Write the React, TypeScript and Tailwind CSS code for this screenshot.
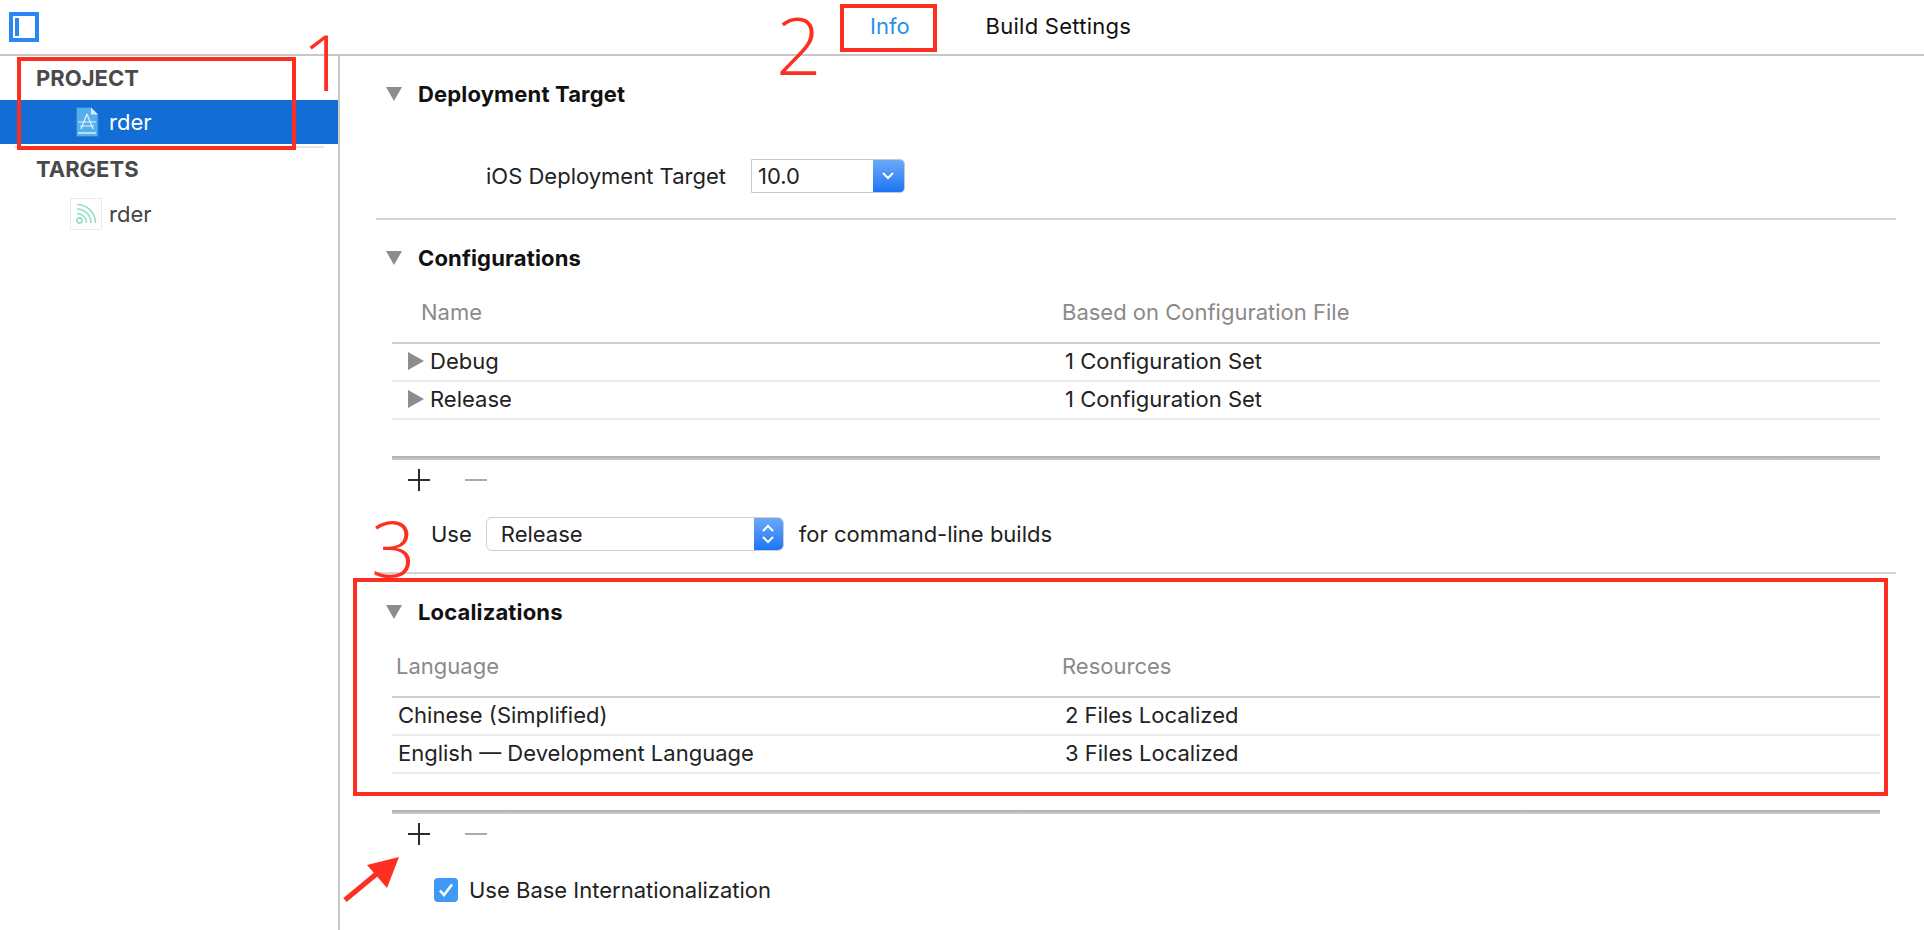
const font = { fontFamily: '"Inter", "Liberation Sans", sans-serif' }
const handFont = { fontFamily: '"Open Sans", sans-serif' }

const configRows = [
  { name: "Debug", value: "1 Configuration Set" },
  { name: "Release", value: "1 Configuration Set" },
]

const localeRows = [
  { name: "Chinese (Simplified)", value: "2 Files Localized" },
  { name: "English — Development Language", value: "3 Files Localized" },
]

function Triangle() {
  return (
    <svg width="16" height="14" viewBox="0 0 16 14" className="shrink-0">
      <path d="M0 0H16L8 14Z" fill="#8c8c8c" />
    </svg>
  )
}

function SectionHeader({ title }: { title: string }) {
  return (
    <div className="flex h-[36px] items-center pl-[10px]">
      <Triangle />
      <span className="ml-[16px] text-[22px] font-bold tracking-[0.15px] text-[#111]">{title}</span>
    </div>
  )
}

function AddRemove() {
  return (
    <div className="flex h-[40px] items-center pl-[16px]">
      <svg width="22" height="22" viewBox="0 0 22 22">
        <path d="M0 11H22M11 0V22" stroke="#2b2b2b" strokeWidth="2" />
      </svg>
      <svg width="22" height="22" viewBox="0 0 22 22" className="ml-[35px]">
        <path d="M0 11H22" stroke="#ababab" strokeWidth="2" />
      </svg>
    </div>
  )
}

function ThickLine() {
  return <div className="h-[4px] bg-linear-to-b from-[#b0b0b0] to-[#cccccc]" />
}

function SidebarFileIcon() {
  return (
    <svg width="24" height="30" viewBox="0 0 24 30" className="shrink-0">
      <path d="M1.5 0.5H16L23 7.5V29.5H1.5Z" fill="#55aef0" stroke="#2b82d4" strokeWidth="1" />
      <path d="M16 0.5L23 7.5H16Z" fill="#d6ecfb" />
      <path d="M3 26H21" stroke="#dff0fc" strokeWidth="1.5" />
      <path d="M12 7L6 22M12 7L18 22M3 15H21M5 19H19" stroke="#e3f2fd" strokeWidth="1.2" fill="none" />
    </svg>
  )
}

function RssIcon() {
  return (
    <div className="flex h-[32px] w-[32px] shrink-0 items-center justify-center border border-[#ececec] bg-white">
      <svg width="22" height="22" viewBox="0 0 22 22" fill="none" stroke="#93dfc6" strokeWidth="1.6">
        <circle cx="4.5" cy="17.5" r="2.6" />
        <path d="M2 10.5a9.5 9.5 0 0 1 9.5 9.5" />
        <path d="M2 6a14 14 0 0 1 14 14" />
        <path d="M2 1.5a18.5 18.5 0 0 1 18.5 18.5" />
      </svg>
    </div>
  )
}

function Disclosure() {
  return (
    <svg width="16" height="18" viewBox="0 0 16 18" className="shrink-0">
      <path d="M0 0L16 9L0 18Z" fill="#8c8c8c" />
    </svg>
  )
}

export default function App() {
  return (
    <div className="relative h-[930px] w-[1924px] overflow-hidden bg-white text-[#222]" style={font}>
      <header className="flex h-[56px] items-start border-b-2 border-[#c8c8c8] pl-[9px]">
        <svg width="30" height="30" viewBox="0 0 30 30" className="mt-[12px] shrink-0">
          <rect x="2" y="2" width="26" height="26" fill="none" stroke="#2a86f2" strokeWidth="4" />
          <rect x="6" y="6" width="4" height="18" fill="#2a86f2" />
        </svg>
        <div className="ml-[831px] flex h-[54px] items-center pb-[2px] text-[22px]">
          <span className="text-[#2a8fe6]">Info</span>
          <span className="ml-[76px] tracking-[0.25px] text-[#111]">Build Settings</span>
        </div>
      </header>

      <div className="flex h-[874px]">
        <aside className="w-[340px] shrink-0 border-r-2 border-[#c8c8c8] text-[22px]">
          <div className="flex h-[44px] items-center pl-[36px] text-[22px] font-bold text-[#4a4a4a]">PROJECT</div>
          <div className="flex h-[44px] items-center bg-[#126dd5] pl-[75px] text-white">
            <SidebarFileIcon />
            <span className="ml-[10px]">rder</span>
          </div>
          <div className="mx-[14px] mt-[2px] h-[2px] bg-[#e6e6e6]" />
          <div className="flex h-[42px] items-center pl-[36px] text-[22px] font-bold text-[#4a4a4a]">TARGETS</div>
          <div className="mt-[4px] flex h-[40px] items-center pl-[70px] text-[#444]">
            <RssIcon />
            <span className="ml-[7px]">rder</span>
          </div>
        </aside>

        <main className="flex-1 pl-[36px] pr-[28px] text-[22px]">
          <div className="mt-[20px]">
            <SectionHeader title="Deployment Target" />
          </div>
          <div className="mt-[47px] flex h-[34px] items-center pl-[110px]">
            <span>iOS Deployment Target</span>
            <div className="ml-[25px] flex h-[34px] w-[154px] overflow-hidden rounded-r-[5px] border border-[#c8c8c8] bg-white">
              <span className="flex-1 pl-[6px] leading-[33px]">10.0</span>
              <div className="flex w-[31px] items-center justify-center bg-linear-to-b from-[#6aa9f7] to-[#1a74f5]">
                <svg width="12" height="8" viewBox="0 0 12 8" fill="none" stroke="white" strokeWidth="2">
                  <path d="M1 1L6 6L11 1" />
                </svg>
              </div>
            </div>
          </div>
          <div className="mt-[25px] h-[2px] bg-[#d4d4d4]" />

          <div className="mt-[20px]">
            <SectionHeader title="Configurations" />
          </div>
          <div className="mx-[16px] mt-[18px]">
            <div className="flex h-[50px] border-b-2 border-[#cfcfcf] pb-[12px] pt-[2px] text-[#8a8a8a]">
              <span className="w-[670px] pl-[29px]">Name</span>
              <span>Based on Configuration File</span>
            </div>
            {configRows.map((row) => (
              <div key={row.name} className="flex h-[38px] items-center border-b-2 border-[#ececec] pb-[2px]">
                <div className="flex w-[673px] items-center pl-[16px]">
                  <Disclosure />
                  <span className="ml-[6px]">{row.name}</span>
                </div>
                <span>{row.value}</span>
              </div>
            ))}
          </div>
          <div className="mx-[16px] mt-[36px]">
            <ThickLine />
            <AddRemove />
          </div>
          <div className="mt-[17px] flex h-[34px] items-center pl-[55px]">
            <span>Use</span>
            <div className="ml-[14px] flex h-[34px] w-[298px] overflow-hidden rounded-[6px] border border-[#cfcfcf] bg-white">
              <span className="flex-1 pl-[14px] leading-[32px]">Release</span>
              <div className="flex w-[29px] items-center justify-center bg-linear-to-b from-[#6aa9f7] to-[#1a74f5]">
                <svg width="14" height="24" viewBox="0 0 14 24" fill="none" stroke="white" strokeWidth="2">
                  <path d="M2 9L7 4L12 9M2 15L7 20L12 15" />
                </svg>
              </div>
            </div>
            <span className="ml-[15px]">for command-line builds</span>
          </div>
          <div className="mt-[21px] h-[2px] bg-[#d4d4d4]" />

          <div className="mt-[20px]">
            <SectionHeader title="Localizations" />
          </div>
          <div className="mx-[16px] mt-[18px]">
            <div className="flex h-[50px] border-b-2 border-[#cfcfcf] pb-[12px] pt-[2px] text-[#8a8a8a]">
              <span className="w-[670px] pl-[4px]">Language</span>
              <span>Resources</span>
            </div>
            {localeRows.map((row) => (
              <div key={row.name} className="flex h-[38px] items-center border-b-2 border-[#ececec] pb-[2px]">
                <span className="w-[673px] pl-[6px]">{row.name}</span>
                <span>{row.value}</span>
              </div>
            ))}
          </div>
          <div className="mx-[16px] mt-[36px]">
            <ThickLine />
            <AddRemove />
          </div>
          <div className="mt-[24px] flex h-[24px] items-center pl-[58px]">
            <span className="flex h-[24px] w-[24px] items-center justify-center rounded-[4px] bg-[#3f99f7]">
              <svg width="16" height="14" viewBox="0 0 16 14" fill="none" stroke="white" strokeWidth="2.6">
                <path d="M2 7.5L6 12L14 1.5" />
              </svg>
            </span>
            <span className="ml-[11px]">Use Base Internationalization</span>
          </div>
        </main>
      </div>

      {/* red annotations drawn on top of the screenshot */}
      <div className="absolute left-[17px] top-[57px] h-[93px] w-[279px] border-4 border-[#fe2e20]" />
      <div className="absolute left-[840px] top-[4px] h-[48px] w-[97px] border-4 border-[#fe2e20]" />
      <div className="absolute left-[353px] top-[578px] h-[218px] w-[1535px] border-4 border-[#fe2e20]" />
      <span className="absolute left-[302px] top-[26px] text-[78px] leading-[70px] font-light text-[#fe2e20]" style={handFont}>1</span>
      <span className="absolute left-[776px] top-[9px] text-[80px] leading-[70px] font-light text-[#fe2e20]" style={handFont}>2</span>
      <span className="absolute left-[371px] top-[512px] text-[78px] leading-[70px] font-light text-[#fe2e20]" style={handFont}>3</span>
      <svg className="absolute left-[340px] top-[850px]" width="64" height="54" viewBox="0 0 64 54">
        <path d="M5 50L40 21" stroke="#fe2e20" strokeWidth="5" />
        <path d="M59 7L27 15L47 38Z" fill="#fe2e20" />
      </svg>
    </div>
  )
}
